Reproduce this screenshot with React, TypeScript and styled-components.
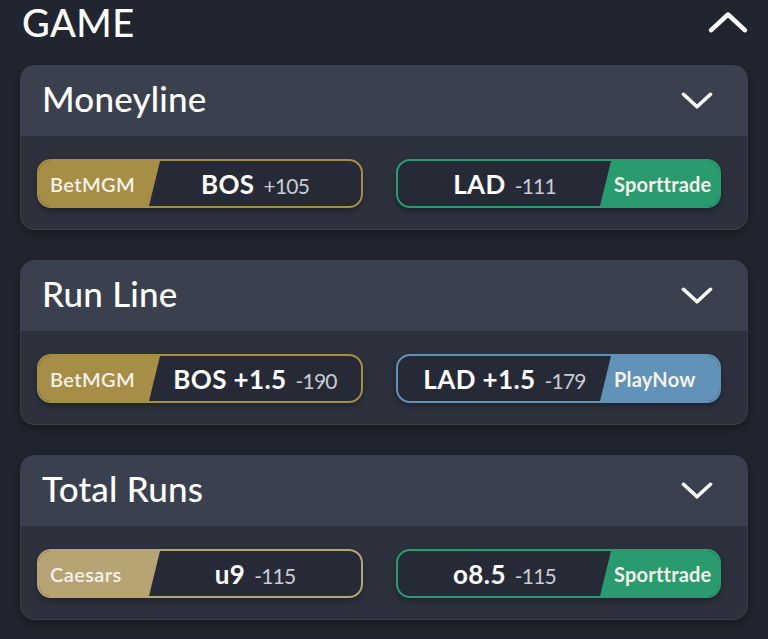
import React from "react";
import styled, { createGlobalStyle } from "styled-components";

const GlobalStyle = createGlobalStyle`
    html, body {
        margin: 0;
        padding: 0;
        background: #21252f;
        font-family: "Lato", "Noto Sans", sans-serif;
        color: #ffffff;
    }
`;

const Page = styled.div`
    width: 768px;
    height: 639px;
    overflow: hidden;
    background: #21252f;
`;

const TopBar = styled.div`
    display: flex;
    align-items: center;
    justify-content: space-between;
    height: 44px;
    padding: 0 20px 0 22px;

    h1 {
        margin: 0;
        font-size: 38px;
        font-weight: 500;
        letter-spacing: 0.5px;
        line-height: 44px;
    }
`;

const Cards = styled.div`
    display: flex;
    flex-direction: column;
    gap: 30px;
    padding: 21px 20px 0 20px;
`;

const Card = styled.section`
    border-radius: 14px;
    overflow: hidden;
    background: #2c313d;
    box-shadow: 0 4px 10px rgba(0, 0, 0, 0.35);
    border: 1px solid #3a404d;
`;

const CardHeader = styled.div`
    display: flex;
    align-items: center;
    justify-content: space-between;
    height: 70px;
    box-sizing: border-box;
    padding: 0 34px 6px 21px;
    background: #3a404e;

    h2 {
        margin: 0;
        font-size: 35px;
        font-weight: 500;
        letter-spacing: 0.2px;
    }

    svg {
        margin-top: 6px;
    }
`;

const CardBody = styled.div`
    display: grid;
    grid-template-columns: 326px 325px;
    gap: 33px;
    padding: 23px 0 21px 16px;
`;

const Pill = styled.div<{ $color: string }>`
    display: flex;
    height: 49px;
    box-sizing: border-box;
    border: 2px solid ${(p) => p.$color};
    border-radius: 14px;
    overflow: hidden;
    background: #262a36;
    box-shadow: 0 3px 6px rgba(0, 0, 0, 0.3);
`;

const Brand = styled.div<{ $color: string; $side: "left" | "right" }>`
    display: flex;
    align-items: center;
    width: ${(p) => (p.$side === "left" ? "121px" : "119px")};
    flex-shrink: 0;
    background: ${(p) => p.$color};
    font-size: 20px;
    font-weight: ${(p) => (p.$side === "left" ? 600 : 700)};
    letter-spacing: ${(p) => (p.$side === "left" ? "0.4px" : "0.2px")};
    color: #f4f1ea;
    padding: ${(p) => (p.$side === "left" ? "0 0 0 11px" : "0 0 0 14px")};
    box-sizing: border-box;
    white-space: nowrap;
    clip-path: ${(p) =>
        p.$side === "left"
            ? "polygon(0 0, 100% 0, calc(100% - 11px) 100%, 0 100%)"
            : "polygon(11px 0, 100% 0, 100% 100%, 0 100%)"};
    margin: ${(p) => (p.$side === "left" ? "0 -11px 0 0" : "0 0 0 -11px")};
`;

const Line = styled.div`
    flex: 1;
    display: flex;
    align-items: baseline;
    justify-content: center;
    align-self: center;
    gap: 9px;

    b {
        font-size: 26px;
        font-weight: 700;
        letter-spacing: 0.4px;
    }

    span {
        font-size: 21px;
        font-weight: 400;
        letter-spacing: -0.8px;
        color: #c9ccd4;
    }
`;

const Chevron = ({ up, size }: { up?: boolean; size: number }) => (
    <svg width={size} height={size * 0.55} viewBox="0 0 32 17" fill="none">
        <path
            d={up ? "M2.5 15 L16 2.5 L29.5 15" : "M2.5 2 L16 14.5 L29.5 2"}
            stroke="#ffffff"
            strokeWidth="3.6"
            strokeLinecap="round"
            strokeLinejoin="round"
        />
    </svg>
);

type Odd = {
    book: string;
    color: string;
    label: string;
    price: string;
};

type Market = {
    title: string;
    left: Odd;
    right: Odd;
};

const GOLD = "#a68e47";
const SAND = "#b6a474";
const GREEN = "#2a9b6f";
const BLUE = "#6192b8";

const markets: Market[] = [
    {
        title: "Moneyline",
        left: { book: "BetMGM", color: GOLD, label: "BOS", price: "+105" },
        right: { book: "Sporttrade", color: GREEN, label: "LAD", price: "-111" },
    },
    {
        title: "Run Line",
        left: { book: "BetMGM", color: GOLD, label: "BOS +1.5", price: "-190" },
        right: { book: "PlayNow", color: BLUE, label: "LAD +1.5", price: "-179" },
    },
    {
        title: "Total Runs",
        left: { book: "Caesars", color: SAND, label: "u9", price: "-115" },
        right: { book: "Sporttrade", color: GREEN, label: "o8.5", price: "-115" },
    },
];

function App() {
    return (
        <Page>
            <GlobalStyle />
            <TopBar>
                <h1>GAME</h1>
                <Chevron up size={40} />
            </TopBar>
            <Cards>
                {markets.map((m) => (
                    <Card key={m.title}>
                        <CardHeader>
                            <h2>{m.title}</h2>
                            <Chevron size={32} />
                        </CardHeader>
                        <CardBody>
                            <Pill $color={m.left.color}>
                                <Brand $color={m.left.color} $side="left">
                                    {m.left.book}
                                </Brand>
                                <Line>
                                    <b>{m.left.label}</b>
                                    <span>{m.left.price}</span>
                                </Line>
                            </Pill>
                            <Pill $color={m.right.color}>
                                <Line>
                                    <b>{m.right.label}</b>
                                    <span>{m.right.price}</span>
                                </Line>
                                <Brand $color={m.right.color} $side="right">
                                    {m.right.book}
                                </Brand>
                            </Pill>
                        </CardBody>
                    </Card>
                ))}
            </Cards>
        </Page>
    );
}

export default App;
